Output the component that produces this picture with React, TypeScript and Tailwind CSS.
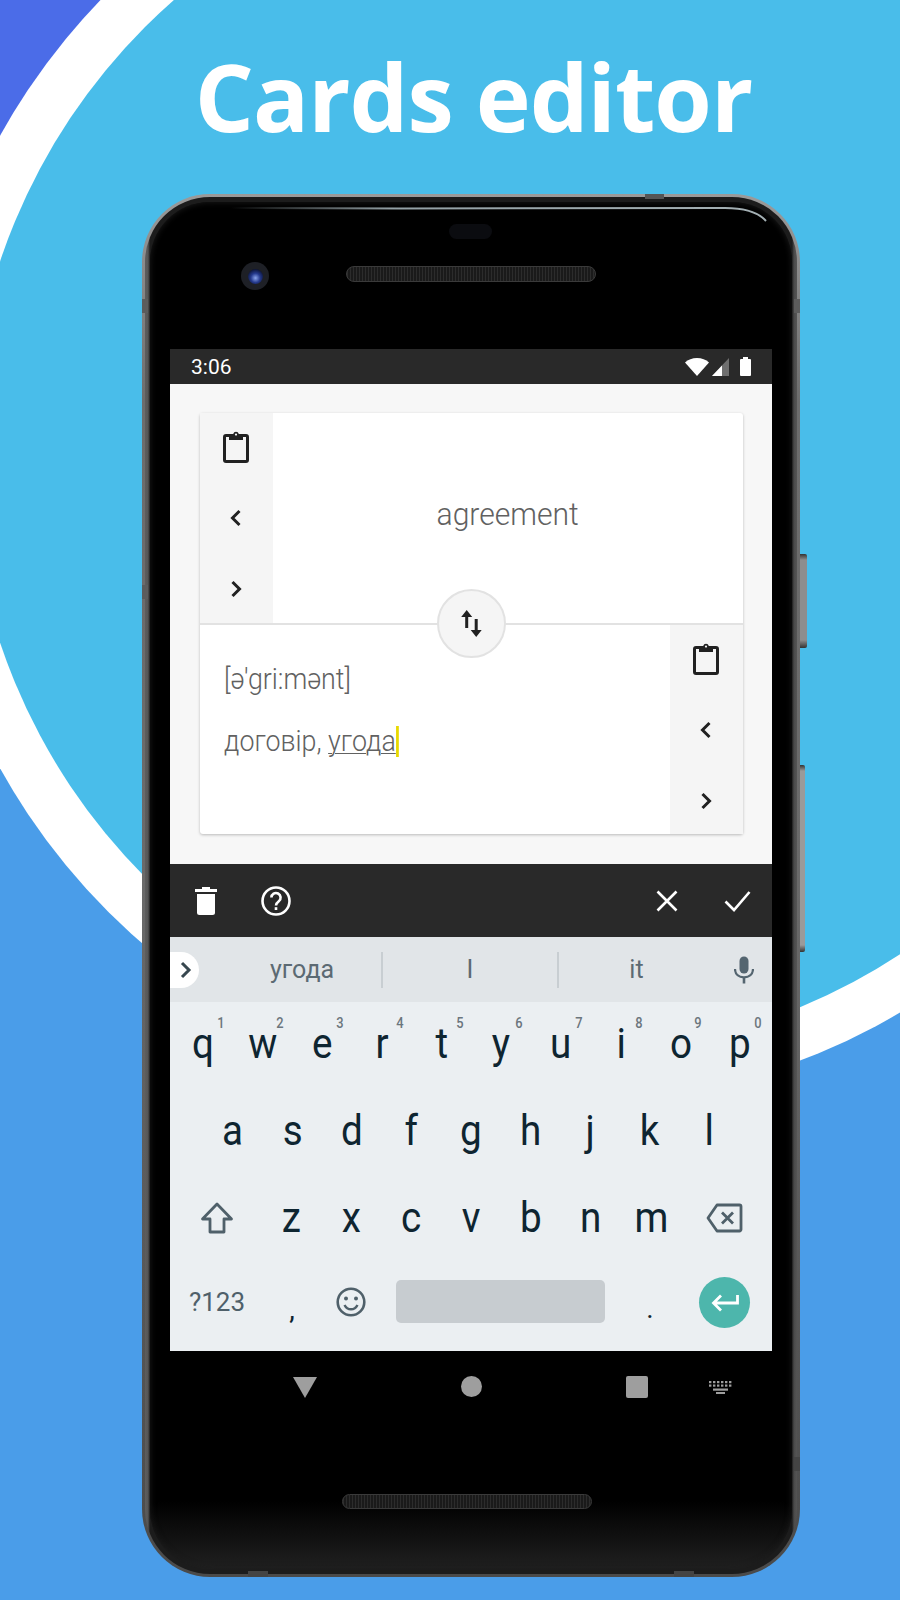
import * as React from "react";

const ROW_1 = [
  ["q", "1"],
  ["w", "2"],
  ["e", "3"],
  ["r", "4"],
  ["t", "5"],
  ["y", "6"],
  ["u", "7"],
  ["i", "8"],
  ["o", "9"],
  ["p", "0"],
];
const ROW_2 = ["a", "s", "d", "f", "g", "h", "j", "k", "l"];
const ROW_3 = ["z", "x", "c", "v", "b", "n", "m"];

/* Icons */
function ClipboardIcon() {
  return (
    <svg width="28" height="34" viewBox="0 0 28 34" fill="none">
      <rect x="2.5" y="5.5" width="23" height="26" rx="1.5" stroke="#212121" strokeWidth="3" />
      <path d="M7 4h4.2a2.9 2.9 0 0 1 5.6 0H21v6H7z" fill="#212121" />
      <circle cx="14" cy="4.6" r="1.1" fill="#f5f5f5" />
    </svg>
  );
}

function ChevronIcon({ dir }: { dir: "left" | "right" }) {
  return (
    <svg width="14" height="18" viewBox="0 0 14 18" fill="none">
      <path
        d={dir === "left" ? "M10.5 2 3.5 9l7 7" : "M3.5 2l7 7-7 7"}
        stroke="#212121"
        strokeWidth="3"
      />
    </svg>
  );
}

function SwapIcon() {
  return (
    <svg width="21" height="27" viewBox="0 0 21 27" fill="#212121">
      <path d="M5.700 0 11.200 7H7.200V18H4.200V7H0.200z" />
      <path d="M15.200 27 9.700 20H13.700V9H16.700V20H20.700z" />
    </svg>
  );
}

function TrashIcon() {
  return (
    <svg width="22" height="28" viewBox="0 0 22 28" fill="white">
      <path d="M7 0h8v2h7v3H0V2h7z" />
      <path d="M2 7h18v18.5a2.5 2.5 0 0 1-2.5 2.5h-13A2.5 2.5 0 0 1 2 25.5z" />
    </svg>
  );
}

function HelpIcon() {
  return (
    <svg width="30" height="30" viewBox="0 0 30 30" fill="none">
      <circle cx="15" cy="15" r="13.5" stroke="white" strokeWidth="2.6" />
      <path
        d="M10.4 11.6a4.6 4.6 0 1 1 7.4 3.7c-1.7 1.3-2.8 2.2-2.8 4.2"
        stroke="white"
        strokeWidth="2.6"
      />
      <rect x="13.700" y="21.200" width="2.600" height="2.800" fill="white" />
    </svg>
  );
}

function CloseIcon() {
  return (
    <svg width="22" height="22" viewBox="0 0 22 22" fill="none">
      <path d="M1.5 1.5l19 19M20.5 1.5l-19 19" stroke="white" strokeWidth="2.6" />
    </svg>
  );
}

function CheckIcon() {
  return (
    <svg width="27" height="22" viewBox="0 0 27 22" fill="none">
      <path d="M1.5 11.5l8.5 8.5L25.5 2" stroke="white" strokeWidth="2.6" />
    </svg>
  );
}

function MicIcon() {
  return (
    <svg width="20" height="28" viewBox="0 0 20 28" fill="none">
      <rect x="5.5" y="0.5" width="9" height="17" rx="4.5" fill="#546570" />
      <path d="M1 13c0 5.4 4 8.4 9 8.4s9-3 9-8.4" stroke="#546570" strokeWidth="2.2" />
      <path d="M10 21v6.5" stroke="#546570" strokeWidth="2.6" />
    </svg>
  );
}

function ShiftIcon() {
  return (
    <svg width="34" height="32" viewBox="0 0 34 32" fill="none">
      <path
        d="M17 2 2.5 17H10v13h14V17h7.5z"
        stroke="#4f606a"
        strokeWidth="2.8"
        strokeLinejoin="round"
      />
    </svg>
  );
}

function BackspaceIcon() {
  return (
    <svg width="37" height="30" viewBox="0 0 37 30" fill="none">
      <path
        d="M11 2h22.5A1.5 1.5 0 0 1 35 3.500v23a1.500 1.500 0 0 1-1.500 1.500H11L2 15z"
        stroke="#4f606a"
        strokeWidth="2.8"
        strokeLinejoin="round"
      />
      <path d="M16 9.500l11 11M27 9.500l-11 11" stroke="#4f606a" strokeWidth="2.8" />
    </svg>
  );
}

function SmileIcon() {
  return (
    <svg width="30" height="30" viewBox="0 0 30 30" fill="none">
      <circle cx="15" cy="15" r="13.300" stroke="#4f606a" strokeWidth="2.600" />
      <circle cx="10" cy="11.500" r="2" fill="#4f606a" />
      <circle cx="20" cy="11.500" r="2" fill="#4f606a" />
      <path d="M8.500 18c1.500 3 3.700 4.300 6.500 4.300s5-1.300 6.500-4.300" stroke="#4f606a" strokeWidth="2.400" />
    </svg>
  );
}

function EnterIcon() {
  return (
    <svg width="28" height="20" viewBox="0 0 28 20" fill="none">
      <path d="M26.500 2v8H3M10 2.500 2.500 10l7.500 7.500" stroke="white" strokeWidth="2.800" />
    </svg>
  );
}

function KeyboardHideIcon() {
  return (
    <svg width="23" height="13" viewBox="0 0 23 13" fill="#9e9e9e">
      {[0, 1].map((row) =>
        [0, 1, 2, 3, 4, 5].map((col) => (
          <rect key={`${row}-${col}`} x={col * 4} y={row * 3.500} width="2.400" height="2.200" />
        )),
      )}
      <rect x="4" y="7.500" width="15" height="2.200" />
      <rect x="7" y="11" width="9" height="2" />
    </svg>
  );
}

/* Card sections */
function PaneButtons() {
  return (
    <div className="flex w-[73px] shrink-0 flex-col bg-[#f5f5f5]">
      <div className="flex flex-1 items-center justify-center pb-[2px]">
        <ClipboardIcon />
      </div>
      <div className="flex flex-1 items-center justify-center pt-[2px]">
        <ChevronIcon dir="left" />
      </div>
      <div className="flex flex-1 items-center justify-center pt-[4px]">
        <ChevronIcon dir="right" />
      </div>
    </div>
  );
}

function EditorCard() {
  return (
    <div className="relative h-[421px] w-[543px] rounded-[3px] bg-white shadow-[0_1px_3px_rgba(0,0,0,0.25)]">
      <div className="flex h-[212px] border-b-2 border-[#e2e2e2]">
        <PaneButtons />
        <div className="flex flex-1 items-center justify-center pb-[8px] text-[#616161]">
          <span className="scale-x-[0.94] text-[32px] font-light">agreement</span>
        </div>
      </div>
      <div className="flex h-[209px]">
        <div className="flex-1 pl-[24px] pt-[36px] text-[29px] font-light leading-[36px] text-[#616161]">
          <div className="origin-left scale-x-[0.925]">[ə'gri:mənt]</div>
          <div className="mt-[26px] flex origin-left scale-x-[0.925] items-center">
            <span>договір,&nbsp;</span>
            <span className="underline decoration-1 underline-offset-2">угода</span>
            <span className="h-[31px] w-[3px] bg-[#e8d900]" />
          </div>
        </div>
        <PaneButtons />
      </div>
      <div className="absolute left-[237px] top-[176px] flex h-[69px] w-[69px] items-center justify-center rounded-full border-2 border-[#e2e2e2] bg-[#f5f5f5]">
        <SwapIcon />
      </div>
    </div>
  );
}

/* Keyboard */
function LetterKey({ letter, hint }: { letter: string; hint?: string }) {
  return (
    <div className="relative flex h-[87px] flex-1 items-center justify-center pb-[3px] text-[42px] leading-none text-[#0e2531]">
      {hint && (
        <span className="absolute right-[8px] top-[12px] scale-x-[0.92] text-[14px] font-medium leading-[18px] text-[#6b767d]">
          {hint}
        </span>
      )}
      <span className="scale-x-[0.92]">{letter}</span>
    </div>
  );
}

function Keyboard() {
  return (
    <div className="bg-[#ebeff2]">
      <div className="flex h-[65px] items-center bg-[#e1e5e8] text-[25px] text-[#5c6a73]">
        <div className="flex h-[36px] w-[29px] items-center justify-center rounded-r-[18px] bg-white pl-[1px]">
          <svg width="13" height="18" viewBox="0 0 13 18" fill="none">
            <path d="M3 2l7 7-7 7" stroke="#37474f" strokeWidth="3" />
          </svg>
        </div>
        <div className="flex h-[36px] w-[184px] items-center justify-center border-r-2 border-[#c8ced2] pl-[24px]">
          угода
        </div>
        <div className="flex h-[36px] w-[176px] items-center justify-center border-r-2 border-[#c8ced2]">
          I
        </div>
        <div className="flex h-[36px] w-[155px] items-center justify-center">it</div>
        <div className="flex h-[36px] w-[58px] items-center justify-center pl-[1px]">
          <MicIcon />
        </div>
      </div>

      <div className="flex pl-[3px] pr-[2px]">
        {ROW_1.map(([letter, hint]) => (
          <LetterKey key={letter} letter={letter} hint={hint} />
        ))}
      </div>
      <div className="flex pl-[33px] pr-[33px]">
        {ROW_2.map((letter) => (
          <LetterKey key={letter} letter={letter} />
        ))}
      </div>
      <div className="flex">
        <div className="flex h-[87px] w-[91px] items-center justify-center pb-[4px] pl-[3px]">
          <ShiftIcon />
        </div>
        {ROW_3.map((letter) => (
          <LetterKey key={letter} letter={letter} />
        ))}
        <div className="flex h-[87px] w-[91px] items-center justify-center pb-[4px] pr-[5px]">
          <BackspaceIcon />
        </div>
      </div>
      <div className="flex h-[88px] items-start pt-[14px]">
        <div className="flex h-[50px] w-[94px] items-center justify-center text-[26px] text-[#4f606a]">
          ?123
        </div>
        <div className="flex h-[50px] w-[56px] items-center justify-center pt-[16px] text-[28px] text-[#0e2531]">
          ,
        </div>
        <div className="flex h-[50px] w-[62px] items-center justify-center">
          <SmileIcon />
        </div>
        <div className="ml-[14px] mt-[3px] h-[43px] w-[209px] rounded-[5px] bg-[#c7ccd0]" />
        <div className="flex h-[50px] w-[94px] items-center justify-center pr-[4px] pt-[14px] text-[28px] text-[#0e2531]">
          .
        </div>
        <div className="flex h-[51px] w-[51px] items-center justify-center rounded-full bg-[#4db6ac]">
          <EnterIcon />
        </div>
      </div>
    </div>
  );
}

function NavBar() {
  return (
    <div className="flex h-[72px] items-center pl-[52px]">
      <div className="flex w-[166px] justify-center">
        <div className="h-0 w-0 border-x-[12px] border-t-[21px] border-x-transparent border-t-[#9e9e9e]" />
      </div>
      <div className="flex w-[166px] justify-center">
        <div className="-mt-[1px] h-[21px] w-[21px] rounded-full bg-[#9e9e9e]" />
      </div>
      <div className="flex w-[166px] justify-center">
        <div className="h-[22px] w-[22px] rounded-[2px] bg-[#9e9e9e]" />
      </div>
      <div className="-ml-[12px] flex w-[24px] justify-center">
        <KeyboardHideIcon />
      </div>
    </div>
  );
}

function StatusBar() {
  return (
    <div className="flex h-[35px] items-center justify-between bg-[#292929] px-[21px] text-[21px] text-white">
      <span className="pt-[3px]">3:06</span>
      <div className="flex items-center">
        <svg width="24" height="18" viewBox="0 0 24 18" fill="white">
          <path d="M0 4.500C3 1.700 7.300 0 12 0s9 1.700 12 4.500L12 18z" />
        </svg>
        <svg className="ml-[3px]" width="17" height="18" viewBox="0 0 17 18">
          <path d="M0 18 17 0v18z" fill="#6f6f6f" />
          <path d="M0 18 10 7.400V18z" fill="white" />
        </svg>
        <svg className="ml-[11px]" width="11" height="19" viewBox="0 0 11 19" fill="white">
          <path d="M3 2V0h5v2h2a1 1 0 0 1 1 1v15a1 1 0 0 1-1 1H1a1 1 0 0 1-1-1V3a1 1 0 0 1 1-1z" />
        </svg>
      </div>
    </div>
  );
}

function Speaker({ className }: { className: string }) {
  return (
    <div
      className={`absolute rounded-full border border-[#3a3a3a] bg-[repeating-linear-gradient(90deg,#2c2c2c_0,#2c2c2c_1px,#1a1a1a_1px,#1a1a1a_3px)] ${className}`}
    />
  );
}

function Phone() {
  return (
    <div className="relative ml-[142px] h-[1383px] w-[658px]">
      {/* side buttons and antenna bands */}
      <div className="absolute -right-[7px] top-[360px] h-[94px] w-[7px] rounded-r-[2px] bg-[linear-gradient(180deg,#333_0,#8d8d8d_6px,#8d8d8d_86px,#333_94px)]" />
      <div className="absolute -right-[5px] top-[571px] h-[187px] w-[5px] rounded-r-[2px] bg-[linear-gradient(180deg,#333_0,#9a9a9a_6px,#9a9a9a_180px,#333_187px)]" />
      <div className="absolute left-[503px] top-0 z-10 h-[5px] w-[19px] bg-[#555]" />
      <div className="absolute left-0 top-[105px] z-10 h-[14px] w-[6px] bg-[#5c5c5c]" />
      <div className="absolute left-0 top-[391px] z-10 h-[14px] w-[6px] bg-[#5c5c5c]" />
      <div className="absolute right-0 top-[105px] z-10 h-[14px] w-[6px] bg-[#5c5c5c]" />
      <div className="absolute right-0 top-[1263px] z-10 h-[14px] w-[6px] bg-[#444]" />
      <div className="absolute bottom-0 left-[106px] z-10 h-[6px] w-[20px] bg-[#444]" />
      <div className="absolute bottom-0 left-[532px] z-10 h-[6px] w-[20px] bg-[#444]" />

      <div className="h-full rounded-[68px] bg-[linear-gradient(180deg,#9a9a9a_0%,#6d6d6d_15%,#6a6a6a_50%,#4a4a4a_100%)] p-[3px]">
        <div className="h-full rounded-[65px] bg-[linear-gradient(90deg,#5e5e5e_0,#555_3px,#1c1c1c_5px,#1c1c1c_calc(100%_-_5px),#4a4a4a_calc(100%_-_3px),#555_100%)] p-[5px]">
          <div className="relative flex h-full flex-col rounded-[60px] bg-[linear-gradient(180deg,#000_95%,#202020_100%)] px-[20px] pt-[147px] shadow-[inset_0_0_6px_#1c1c1c]">
            {/* earpiece, camera, speakers */}
            <svg
              className="absolute left-[0px] top-0"
              width="642"
              height="40"
              viewBox="0 0 642 40"
              fill="none"
            >
              <defs>
                <linearGradient id="glassLine" x1="0" x2="1" y1="0" y2="0">
                  <stop offset="0" stopColor="#93a0a5" stopOpacity="0" />
                  <stop offset="0.3" stopColor="#93a0a5" />
                  <stop offset="1" stopColor="#a4b0b4" />
                </linearGradient>
              </defs>
              <path d="M81 6C250 7 480 6 575 6c20 0 34 5 41 13" stroke="url(#glassLine)" strokeWidth="2" />
            </svg>
            <div className="absolute left-[299px] top-[22px] h-[15px] w-[43px] rounded-full bg-[#0b0c10]" />
            <div className="absolute left-[91px] top-[60px] flex h-[28px] w-[28px] items-center justify-center rounded-full bg-[#1e2026]">
              <div className="h-[15px] w-[15px] rounded-full bg-[radial-gradient(circle_at_50%_60%,#8aa4ec_0%,#24398c_40%,#070b1e_85%)]" />
            </div>
            <Speaker className="left-[196px] top-[64px] h-[16px] w-[250px]" />
            <Speaker className="left-[192px] top-[1292px] h-[15px] w-[250px]" />

            <StatusBar />
            <div className="flex h-[480px] justify-center bg-[#f7f7f7] pt-[29px]">
              <EditorCard />
            </div>
            <div className="flex h-[73px] items-center bg-[#292929]">
              <div className="flex w-[70px] justify-center pl-[1px]">
                <TrashIcon />
              </div>
              <div className="flex w-[70px] justify-center pl-[1px]">
                <HelpIcon />
              </div>
              <div className="flex-1" />
              <div className="flex w-[70px] justify-center">
                <CloseIcon />
              </div>
              <div className="flex w-[70px] justify-center">
                <CheckIcon />
              </div>
            </div>
            <Keyboard />
            <NavBar />
          </div>
        </div>
      </div>
    </div>
  );
}

export default function App() {
  return (
    <div
      className="relative h-[1600px] w-[900px] overflow-hidden bg-[#4a9de9]"
      style={{ fontFamily: "Roboto, sans-serif" }}
    >
      {/* background arcs */}
      <svg className="absolute inset-0" width="900" height="1600" viewBox="0 0 900 1600">
        <rect x="0" y="0" width="200" height="200" fill="#4b6ce8" />
        <circle cx="569" cy="452" r="651" fill="white" />
        <circle cx="570" cy="452" r="601" fill="#49bdea" />
      </svg>
      <div className="relative flex flex-col">
        <h1
          className="flex h-[194px] items-center justify-center pb-[1px] pl-[47px] text-[93px] font-bold tracking-[-1px] text-white"
          style={{ fontFamily: '"Open Sans", sans-serif' }}
        >
          Cards editor
        </h1>
        <Phone />
      </div>
    </div>
  );
}
